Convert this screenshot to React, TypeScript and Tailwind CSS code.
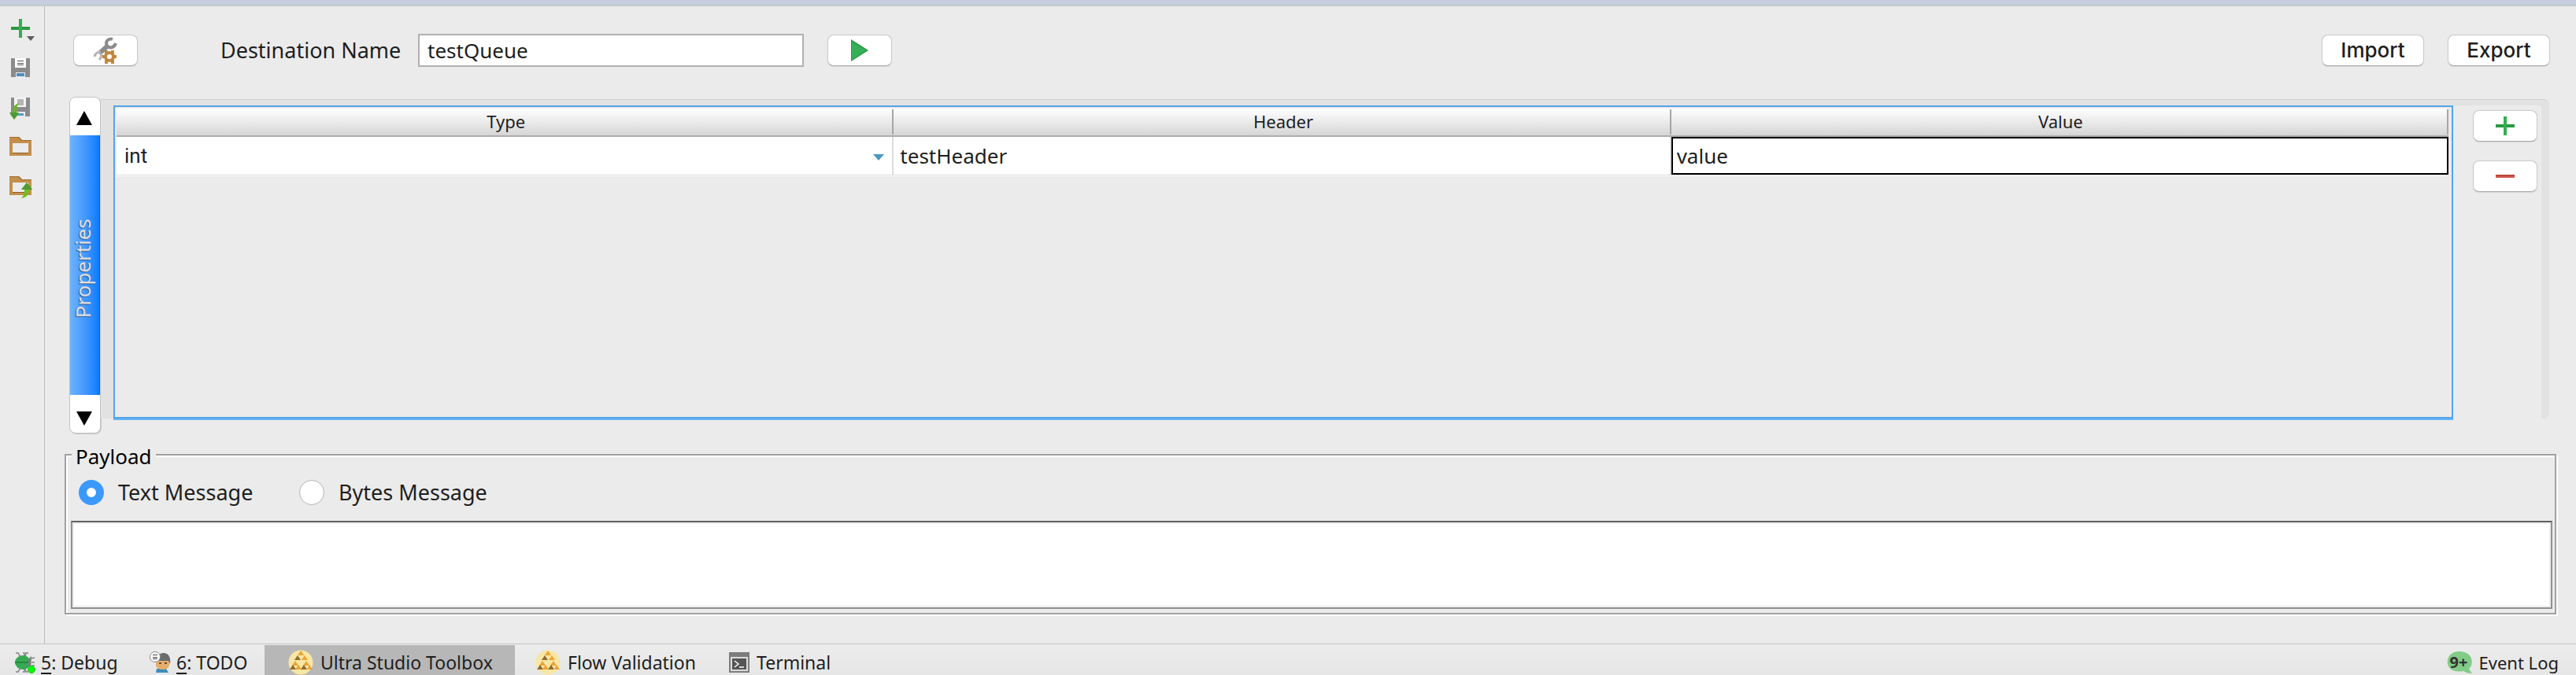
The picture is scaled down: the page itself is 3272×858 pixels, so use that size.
import { useState } from "react";
import type { ReactNode } from "react";

interface HeaderRow {
  type: string;
  header: string;
  value: string;
}

interface ToolButtonProps {
  label: string;
  className?: string;
  children: ReactNode;
}

// white rounded button used in the whole panel
function ToolButton({ label, className, children }: ToolButtonProps) {
  return (
    <button
      type="button"
      aria-label={label}
      className={`flex h-10 shrink-0 items-center justify-center rounded-lg border border-[#c9c9c9] border-b-[#ababab] bg-white shadow-[0_1px_1px_#d4d4d4] ${className}`}
    >
      {children}
    </button>
  );
}

function PlusIcon() {
  return (
    <svg width="24" height="24" viewBox="0 0 24 24">
      <path d="M0 10h24v4H0z" fill="#2a9a40" />
      <path d="M10 0h4v24h-4z" fill="#35ad52" />
    </svg>
  );
}

function MinusIcon() {
  return (
    <svg width="24" height="24" viewBox="0 0 24 24">
      <path d="M0 10h24v4H0z" fill="#cf5b4e" />
      <path d="M0 10h24v2H0z" fill="#b9473c" />
    </svg>
  );
}

function AddIcon() {
  return (
    <svg width="32" height="32" viewBox="0 0 32 32">
      <path d="M2 12h24v4H2z" fill="#2a9a40" />
      <path d="M12 2h4v24h-4z" fill="#35ad52" />
      <path d="M22 24h10l-5 6z" fill="#5c5c5c" />
    </svg>
  );
}

function SaveIcon() {
  return (
    <svg width="32" height="32" viewBox="0 0 32 32">
      <path d="M2 2h24v24H2z" fill="#8b8b8b" />
      <path d="M7 2h14v12H7z" fill="#fff" />
      <path d="M10 5h8v1h-8zM10 8h8v1h-8zM10 10h8v1h-8z" fill="#555" />
      <path d="M8 20h12v6H8z" fill="#ebebeb" />
      <path d="M9 21h10v4H9z" fill="#4a8fc0" />
    </svg>
  );
}

function SaveAllIcon() {
  return (
    <svg width="32" height="32" viewBox="0 0 32 32">
      <path d="M2 2h24v24H2z" fill="#8b8b8b" />
      <path d="M6 2h15v12H6z" fill="#f5f5f5" />
      <path d="M10 4h8v8h-8z" fill="#b5b5b5" />
      <path d="M8 20h12v6H8z" fill="#ebebeb" />
      <path d="M10 22h8v3h-8z" fill="#5b9bc8" />
      <path d="M12 9C6 11 4 15 4 21H0l6 9 6-8H9c0-5 0-9 3-13z" fill="#68b522" />
      <path d="M0 21h12l-6 9z" fill="#4b9c35" />
    </svg>
  );
}

function FolderIcon({ arrow }: { arrow?: boolean }) {
  return (
    <svg width="32" height="32" viewBox="0 0 32 32">
      <path d="M0 2h12l4 4h12v20H0z" fill="#c48f4a" />
      <path d="M0 2h12l4 4h12v1H15l-4-4H0z" fill="#a26f32" />
      <path d="M4 10h20v12H4z" fill="#ebebeb" />
      <path d="M4 22h20v1H4z" fill="#8e5f28" />
      {arrow && (
        <>
          <path d="M22 10l-7 9h4c0 5-1 8-4 11 7-1 10-5 10-11h4z" fill="#74bd20" />
          <path d="M22 10l-7 9h14z" fill="#4b9c35" />
        </>
      )}
    </svg>
  );
}

function SettingsIcon() {
  return (
    <svg width="32" height="34" viewBox="0 0 32 34">
      <g fill="none" stroke="#8b8b8b">
        <path d="M25 3c-5-2-10 3-7 8 3 4 9 3 11-3" strokeWidth="4" />
        <path d="M18 12L8 21" strokeWidth="6" />
        <path d="M10 19c-4 0-7 2-8 6M10 21c1 3 0 6-2 8" stroke="#b4b4b4" strokeWidth="3" />
      </g>
      <g stroke="#c18840" fill="none">
        <path d="M17 17v17M25 17v17M12 25h18" strokeWidth="4" />
        <circle cx="21" cy="25" r="5" strokeWidth="4" fill="#fff" />
      </g>
    </svg>
  );
}

function PlayIcon() {
  return (
    <svg width="22" height="28" viewBox="0 0 22 28">
      <path d="M0 0l22 14L0 28z" fill="#2b9a42" />
      <path d="M1 3l18 11L1 26z" fill="#36b058" />
    </svg>
  );
}

function BugIcon() {
  return (
    <svg width="28" height="28" viewBox="0 0 28 28">
      <g stroke="#858585" strokeWidth="1.5" fill="none">
        <path d="M1 2h3l3 5M10 2h2v5M17 2h-3l-1 5M1 26h3l3-5M10 26h2v-5M17 26h-3l-1-5M20 9l5-1M21 14h4M21 18h4" />
      </g>
      <ellipse cx="10" cy="14" rx="10" ry="9" fill="#35a953" />
      <path d="M0 13h19v2H0z" fill="#26893e" />
      <path d="M21 6c-5 3-6 12-1 16z" fill="#7c7c7c" />
      <circle cx="21" cy="23" r="4.5" fill="#0f0" stroke="#2cb52c" />
    </svg>
  );
}

function TodoIcon() {
  return (
    <svg width="28" height="28" viewBox="0 0 28 28">
      <path d="M9 22h12l3 5H8z" fill="#3e8cba" />
      <path d="M8 11h17v6c0 8-17 8-17 0z" fill="#e6ae6b" />
      <path d="M12 4c8-5 16 0 14 12l-2-4H12z" fill="#6c6c6c" />
      <path d="M12 14h3v2h-3zM19 14h3v2h-3z" fill="#694e32" />
      <circle cx="7" cy="7" r="6.5" fill="#fff" stroke="#858585" />
      <path d="M4 4h6v1H4zM4 7h6v1H4zM4 9h6v1H4z" fill="#444" />
    </svg>
  );
}

function PyramidIcon() {
  return (
    <svg width="32" height="32" viewBox="0 0 32 32">
      <circle cx="16" cy="16" r="15.5" fill="#f8e6a4" />
      <path d="M16 1l4 6h-8zM21 7l4 6h-8zM9 14l4 6H5zM23 14l4 6h-8zM13 19l4 6H9zM27 19l4 6h-7z" fill="#eda336" />
      <path d="M12 7l4 6H8zM6 19l4 6H2zM20 19l4 6h-8z" fill="#8f6b30" />
    </svg>
  );
}

function TerminalIcon() {
  return (
    <svg width="26" height="26" viewBox="0 0 26 26">
      <path d="M0 0h26v26H0z" fill="#7d7d7d" />
      <path d="M2 6h22v18H2z" fill="#dcdcdc" />
      <path d="M4 8h18v14H4z" fill="#555" />
      <path d="M7 11l5 4-5 4M13 19h6" stroke="#fff" strokeWidth="1.5" fill="none" />
    </svg>
  );
}

const sideTools = [
  { label: "Add", icon: <AddIcon /> },
  { label: "Save", icon: <SaveIcon /> },
  { label: "Save as", icon: <SaveAllIcon /> },
  { label: "Open", icon: <FolderIcon /> },
  { label: "Load", icon: <FolderIcon arrow /> },
];

const columns = ["Type", "Header", "Value"];

export default function App() {
  const [destination, setDestination] = useState("testQueue");
  const [row, setRow] = useState<HeaderRow>({
    type: "int",
    header: "testHeader",
    value: "value",
  });
  const [messageType, setMessageType] = useState("text");

  return (
    <div className="flex min-h-screen flex-col bg-[#ebebeb] font-['Noto_Sans',sans-serif] text-[26px] leading-[30px] text-[#1e1e1e]">
      <div className="h-2 border-b-2 border-[#c8c8cb] bg-[#c5cddf]" />

      <div className="flex flex-1">
        {/* left icon bar */}
        <nav className="flex w-[57px] shrink-0 flex-col gap-[18px] border-r border-[#bdbdbd] pt-[14px] pl-3">
          {sideTools.map((tool) => (
            <button key={tool.label} type="button" aria-label={tool.label} className="h-8 w-8">
              {tool.icon}
            </button>
          ))}
        </nav>

        <main className="flex min-w-0 flex-1 flex-col pt-[35px] pr-[25px] pb-[37px] pl-[25px]">
          {/* destination bar */}
          <div className="flex items-center pr-2 pl-[11px]">
            <ToolButton label="Settings" className="w-[82px]">
              <SettingsIcon />
            </ToolButton>
            <label htmlFor="destination" className="ml-[105px] w-[227px] text-[27px] whitespace-nowrap">
              Destination Name
            </label>
            <input
              id="destination"
              value={destination}
              onChange={(e) => setDestination(e.target.value)}
              className="ml-6 h-[42px] w-[490px] border-2 border-[#b0b0b0] bg-white px-[10px] outline-none"
            />
            <ToolButton label="Send" className="ml-[30px] w-[82px]">
              <PlayIcon />
            </ToolButton>
            <div className="ml-auto flex gap-[30px] font-['Inter',sans-serif] text-[26px] font-medium">
              <ToolButton label="Import" className="w-[130px]">
                Import
              </ToolButton>
              <ToolButton label="Export" className="w-[130px]">
                Export
              </ToolButton>
            </div>
          </div>

          {/* properties tab */}
          <div className="mt-[38px] flex min-h-[420px] flex-1 pr-[9px] pl-[6px]">
            <div className="flex w-10 flex-col overflow-hidden rounded-lg border border-[#c4c4c4] bg-white shadow-[1px_1px_1px_#c8c8c8]">
              <button type="button" aria-label="Previous tab" className="flex h-12 items-center justify-center pt-1 pr-[2px]">
                <svg width="20" height="18" viewBox="0 0 20 18">
                  <path d="M10 0l10 18H0z" />
                </svg>
              </button>
              <button
                type="button"
                className="flex flex-1 items-center justify-center border-r border-[#0062f5] bg-linear-to-r from-[#6db3fb] to-[#047bff] pt-2 pr-[6px] text-[#dedede]"
              >
                <span className="rotate-180 [text-shadow:-1px_-1px_1px_#3a5f8c] [writing-mode:vertical-rl]">Properties</span>
              </button>
              <button type="button" aria-label="Next tab" className="flex h-12 items-center justify-center pt-3 pr-[2px]">
                <svg width="20" height="18" viewBox="0 0 20 18">
                  <path d="M0 0h20L10 18z" />
                </svg>
              </button>
            </div>

            <div className="mt-[3px] mb-[19px] flex min-w-0 flex-1 rounded-r-lg border-t border-[#d0d0d0] bg-[#e2e2e2] pt-[7px] pr-[10px] pl-4">
              <div className="flex flex-1 bg-[#ebebeb]">
                <div className="min-w-0 flex-1 border-2 border-[#55a4e8] p-[2px] pr-1 shadow-[0_2px_0_#67b4f8]">
                  <table className="w-full table-fixed border-separate border-spacing-0 shadow-[0_1px_0_#fff]">
                    <thead>
                      <tr>
                        {columns.map((name) => (
                          <th
                            key={name}
                            className="border-b-2 border-[#adadad] bg-linear-to-b from-white to-[#d6d6d6] py-px text-[22px] font-normal"
                          >
                            <div className="h-8 border-r-2 border-[#a6a6a6] pl-1">{name}</div>
                          </th>
                        ))}
                      </tr>
                    </thead>
                    <tbody>
                      <tr className="bg-white">
                        <td className="border-r-2 border-b border-[#dcdcdc] p-0">
                          <div className="relative">
                            <select
                              aria-label="Type"
                              value={row.type}
                              onChange={(e) => setRow({ ...row, type: e.target.value })}
                              className="block h-12 w-full appearance-none bg-white pl-[10px] font-['Roboto',sans-serif] outline-none"
                            >
                              <option>int</option>
                              <option>string</option>
                            </select>
                            <svg width="14" height="8" viewBox="0 0 14 8" className="pointer-events-none absolute top-[22px] right-[10px]">
                              <path d="M0 0h14L7 8z" fill="#4a97c4" />
                            </svg>
                          </div>
                        </td>
                        <td className="border-r-2 border-b border-[#dcdcdc] p-0 pl-2">{row.header}</td>
                        <td className="border-b border-[#dcdcdc] p-0">
                          <input
                            aria-label="Value"
                            value={row.value}
                            onChange={(e) => setRow({ ...row, value: e.target.value })}
                            className="block h-12 w-full border-2 border-black bg-white px-[5px] outline-none"
                          />
                        </td>
                      </tr>
                    </tbody>
                  </table>
                </div>
                <div className="flex flex-col gap-6 pt-[6px] pr-[5px] pl-[25px]">
                  <ToolButton label="Add row" className="w-[82px]">
                    <PlusIcon />
                  </ToolButton>
                  <ToolButton label="Remove row" className="w-[82px]">
                    <MinusIcon />
                  </ToolButton>
                </div>
              </div>
            </div>
          </div>

          {/* payload */}
          <fieldset className="mt-[10px] border-2 border-[#a0a0a0] pr-[3px] pb-[5px] pl-[6px] shadow-[2px_2px_0_#fff,inset_2px_2px_0_#fff]">
            <legend className="ml-px bg-[#ebebeb] px-[5px] pt-1 text-black">Payload</legend>
            <div className="flex gap-[58px] pt-[15px] pb-5 pl-[10px] text-[27px]">
              <label className="flex w-[222px] items-center gap-[18px]">
                <input
                  type="radio"
                  name="messageType"
                  checked={messageType === "text"}
                  onChange={() => setMessageType("text")}
                  className="h-8 w-8 appearance-none rounded-full border border-[#b5b5b5] bg-white checked:border-[10px] checked:border-[#3b99fc]"
                />
                Text Message
              </label>
              <label className="flex items-center gap-[18px]">
                <input
                  type="radio"
                  name="messageType"
                  checked={messageType === "bytes"}
                  onChange={() => setMessageType("bytes")}
                  className="h-8 w-8 appearance-none rounded-full border border-[#b5b5b5] bg-white checked:border-[10px] checked:border-[#3b99fc]"
                />
                Bytes Message
              </label>
            </div>
            <textarea
              aria-label="Payload"
              className="block h-28 w-full resize-none border-2 border-[#909090] border-t-[#606060] bg-white px-2 shadow-[inset_0_0_0_2px_#eee] outline-none"
            />
          </fieldset>
        </main>
      </div>

      {/* tool window bar */}
      <footer className="flex h-10 overflow-hidden border-t border-[#c4c4c4] bg-linear-to-b from-[#ececec] to-[#e6e6e6] text-[23px]">
        <button type="button" className="flex w-[168px] items-center gap-[5px] pt-[6px] pl-[19px]">
          <BugIcon />
          <span>
            <u className="underline-offset-4">5</u>: Debug
          </span>
        </button>
        <button type="button" className="flex w-[168px] items-center gap-[6px] pt-[6px] pl-[22px]">
          <TodoIcon />
          <span>
            <u className="underline-offset-4">6</u>: TODO
          </span>
        </button>
        <button type="button" className="mt-px flex w-[318px] items-center gap-[9px] bg-[#b7b7b7] pt-[5px] pl-[30px]">
          <PyramidIcon />
          Ultra Studio Toolbox
        </button>
        <button type="button" className="flex w-[250px] items-center gap-[9px] pt-[6px] pl-[26px]">
          <PyramidIcon />
          Flow Validation
        </button>
        <button type="button" className="flex items-center gap-[9px] pt-[6px] pl-[22px]">
          <TerminalIcon />
          Terminal
        </button>
        <button type="button" className="ml-auto flex items-center gap-[9px] pt-[6px] pr-[22px] text-[22px]">
          <span className="relative flex h-7 w-8 items-center pl-1 text-[20px] font-bold text-[#333]">
            <svg width="32" height="28" viewBox="0 0 32 28" className="absolute inset-0">
              <path d="M15 0C35 0 34 18 28 22l4 6c-5 0-8-1-11-3C-6 30-4 0 15 0z" fill="#82cc88" />
            </svg>
            <span className="relative">9+</span>
          </span>
          Event Log
        </button>
      </footer>
    </div>
  );
}
